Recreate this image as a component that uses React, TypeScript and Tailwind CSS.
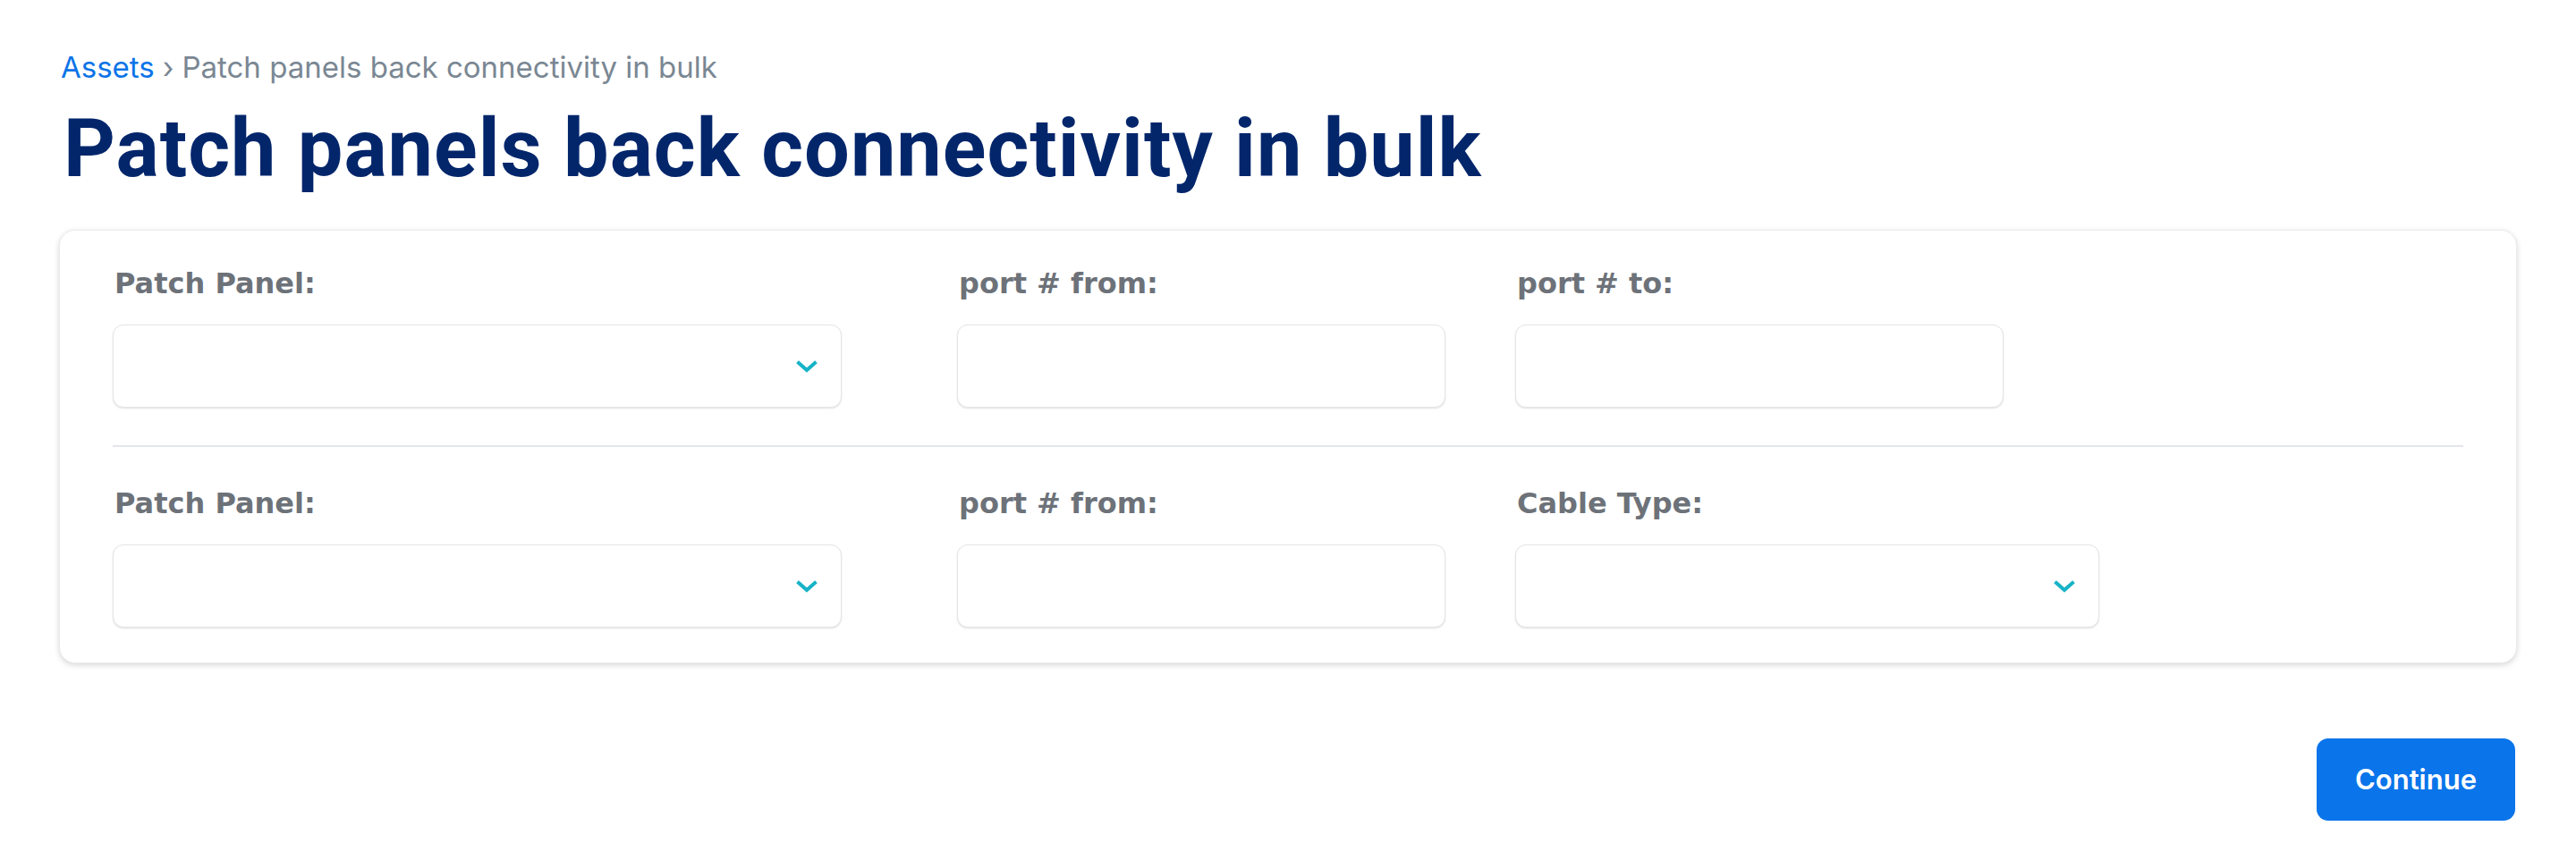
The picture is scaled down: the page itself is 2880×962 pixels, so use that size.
import React from "react";

function Chevron() {
  return (
    <svg width="24" height="14" viewBox="0 0 24 14" fill="none" className="absolute right-[26px] top-1/2 -translate-y-1/2">
      <path d="M3 3 L12 11 L21 3" stroke="#17b3c7" strokeWidth="4" strokeLinecap="square" strokeLinejoin="miter" />
    </svg>
  );
}

function Label({ children }: { children: React.ReactNode }) {
  return (
    <div className="mb-[28px] pl-[2px] font-['DejaVu_Sans',sans-serif] text-[32px] leading-[36px] font-bold text-[#6d7279]">
      {children}
    </div>
  );
}

function Select({ w }: { w: string }) {
  return (
    <div className={`relative h-[93px] rounded-[12px] border border-[#e3e5e8] bg-white shadow-[0_1px_2px_rgba(0,0,0,0.12)] ${w}`}>
      <Chevron />
    </div>
  );
}

function Input() {
  return <div className="h-[93px] w-[546px] rounded-[12px] border border-[#e3e5e8] bg-white shadow-[0_1px_2px_rgba(0,0,0,0.12)]" />;
}

export default function App() {
  return (
    <div className="min-h-screen bg-white px-[66px] pt-[55px] font-['Inter','Liberation_Sans',sans-serif]">
      <div className="pl-[2px] text-[33px] leading-[40px] text-[#7a8793]">
        <span className="text-[#0b74e8]">Assets</span>
        <span className="mx-[9px]">›</span>
        <span>Patch panels back connectivity in bulk</span>
      </div>
      <h1 className="mt-[22px] pl-[5px] font-['Roboto','Noto_Sans',sans-serif] text-[90px] leading-[100px] font-bold tracking-[1px] text-[#03266b]">
        Patch panels back connectivity in bulk
      </h1>
      <div className="mt-[40px] rounded-[18px] border border-[#ececec] bg-white px-[59px] pt-[41px] pb-[39px] shadow-[0_2px_6px_rgba(0,0,0,0.16)]">
        <div className="flex">
          <div className="w-[815px]">
            <Label>Patch Panel:</Label>
            <Select w="w-[815px]" />
          </div>
          <div className="ml-[129px] w-[546px]">
            <Label>port # from:</Label>
            <Input />
          </div>
          <div className="ml-[78px] w-[548px]">
            <Label>port # to:</Label>
            <Input />
          </div>
        </div>
        <div className="mt-[42px] mb-[45px] h-[2px] bg-[#e3e6ea]" />
        <div className="flex">
          <div className="w-[815px]">
            <Label>Patch Panel:</Label>
            <Select w="w-[815px]" />
          </div>
          <div className="ml-[129px] w-[546px]">
            <Label>port # from:</Label>
            <Input />
          </div>
          <div className="ml-[78px] w-[653px]">
            <Label>Cable Type:</Label>
            <Select w="w-[653px]" />
          </div>
        </div>
      </div>
      <div className="mt-[84px] flex justify-end pr-[2px]">
        <button className="h-[92px] w-[222px] rounded-[13px] bg-[#0a74ea] text-[31px] font-semibold text-white">
          Continue
        </button>
      </div>
    </div>
  );
}
